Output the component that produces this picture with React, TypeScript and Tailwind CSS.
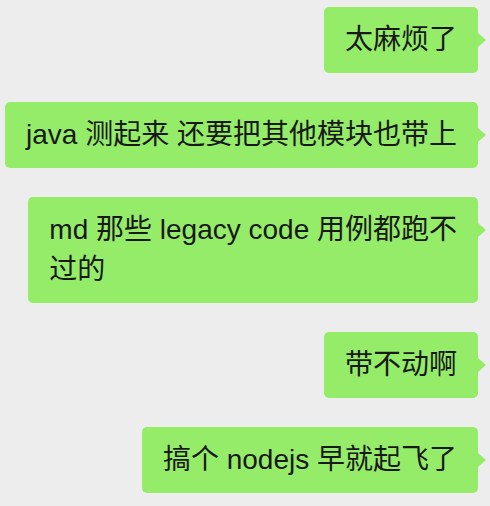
const messages = [
  "太麻烦了",
  "java 测起来 还要把其他模块也带上",
  "md 那些 legacy code 用例都跑不\n过的",
  "带不动啊",
  "搞个 nodejs 早就起飞了",
];

function Bubble({ text }: { text: string }) {
  return (
    <div className="relative whitespace-pre rounded-[5px] bg-[#95EC69] px-[21px] py-[13px] text-[28px] leading-[40px] text-[#191919]">
      {text}
      {/* 右侧小三角 */}
      <span className="absolute left-full top-[26px] h-0 w-0 border-y-[7px] border-l-[8px] border-y-transparent border-l-[#95EC69]" />
    </div>
  );
}

export default function App() {
  return (
    <div
      className="flex min-h-screen flex-col items-end gap-[29px] bg-[#EDEDED] pb-[13px] pl-[4px] pr-[12px] pt-[7px]"
      style={{ fontFamily: '"Liberation Sans", "Noto Sans CJK SC", sans-serif' }}
    >
      {messages.map((m, i) => (
        <Bubble key={i} text={m} />
      ))}
    </div>
  );
}
